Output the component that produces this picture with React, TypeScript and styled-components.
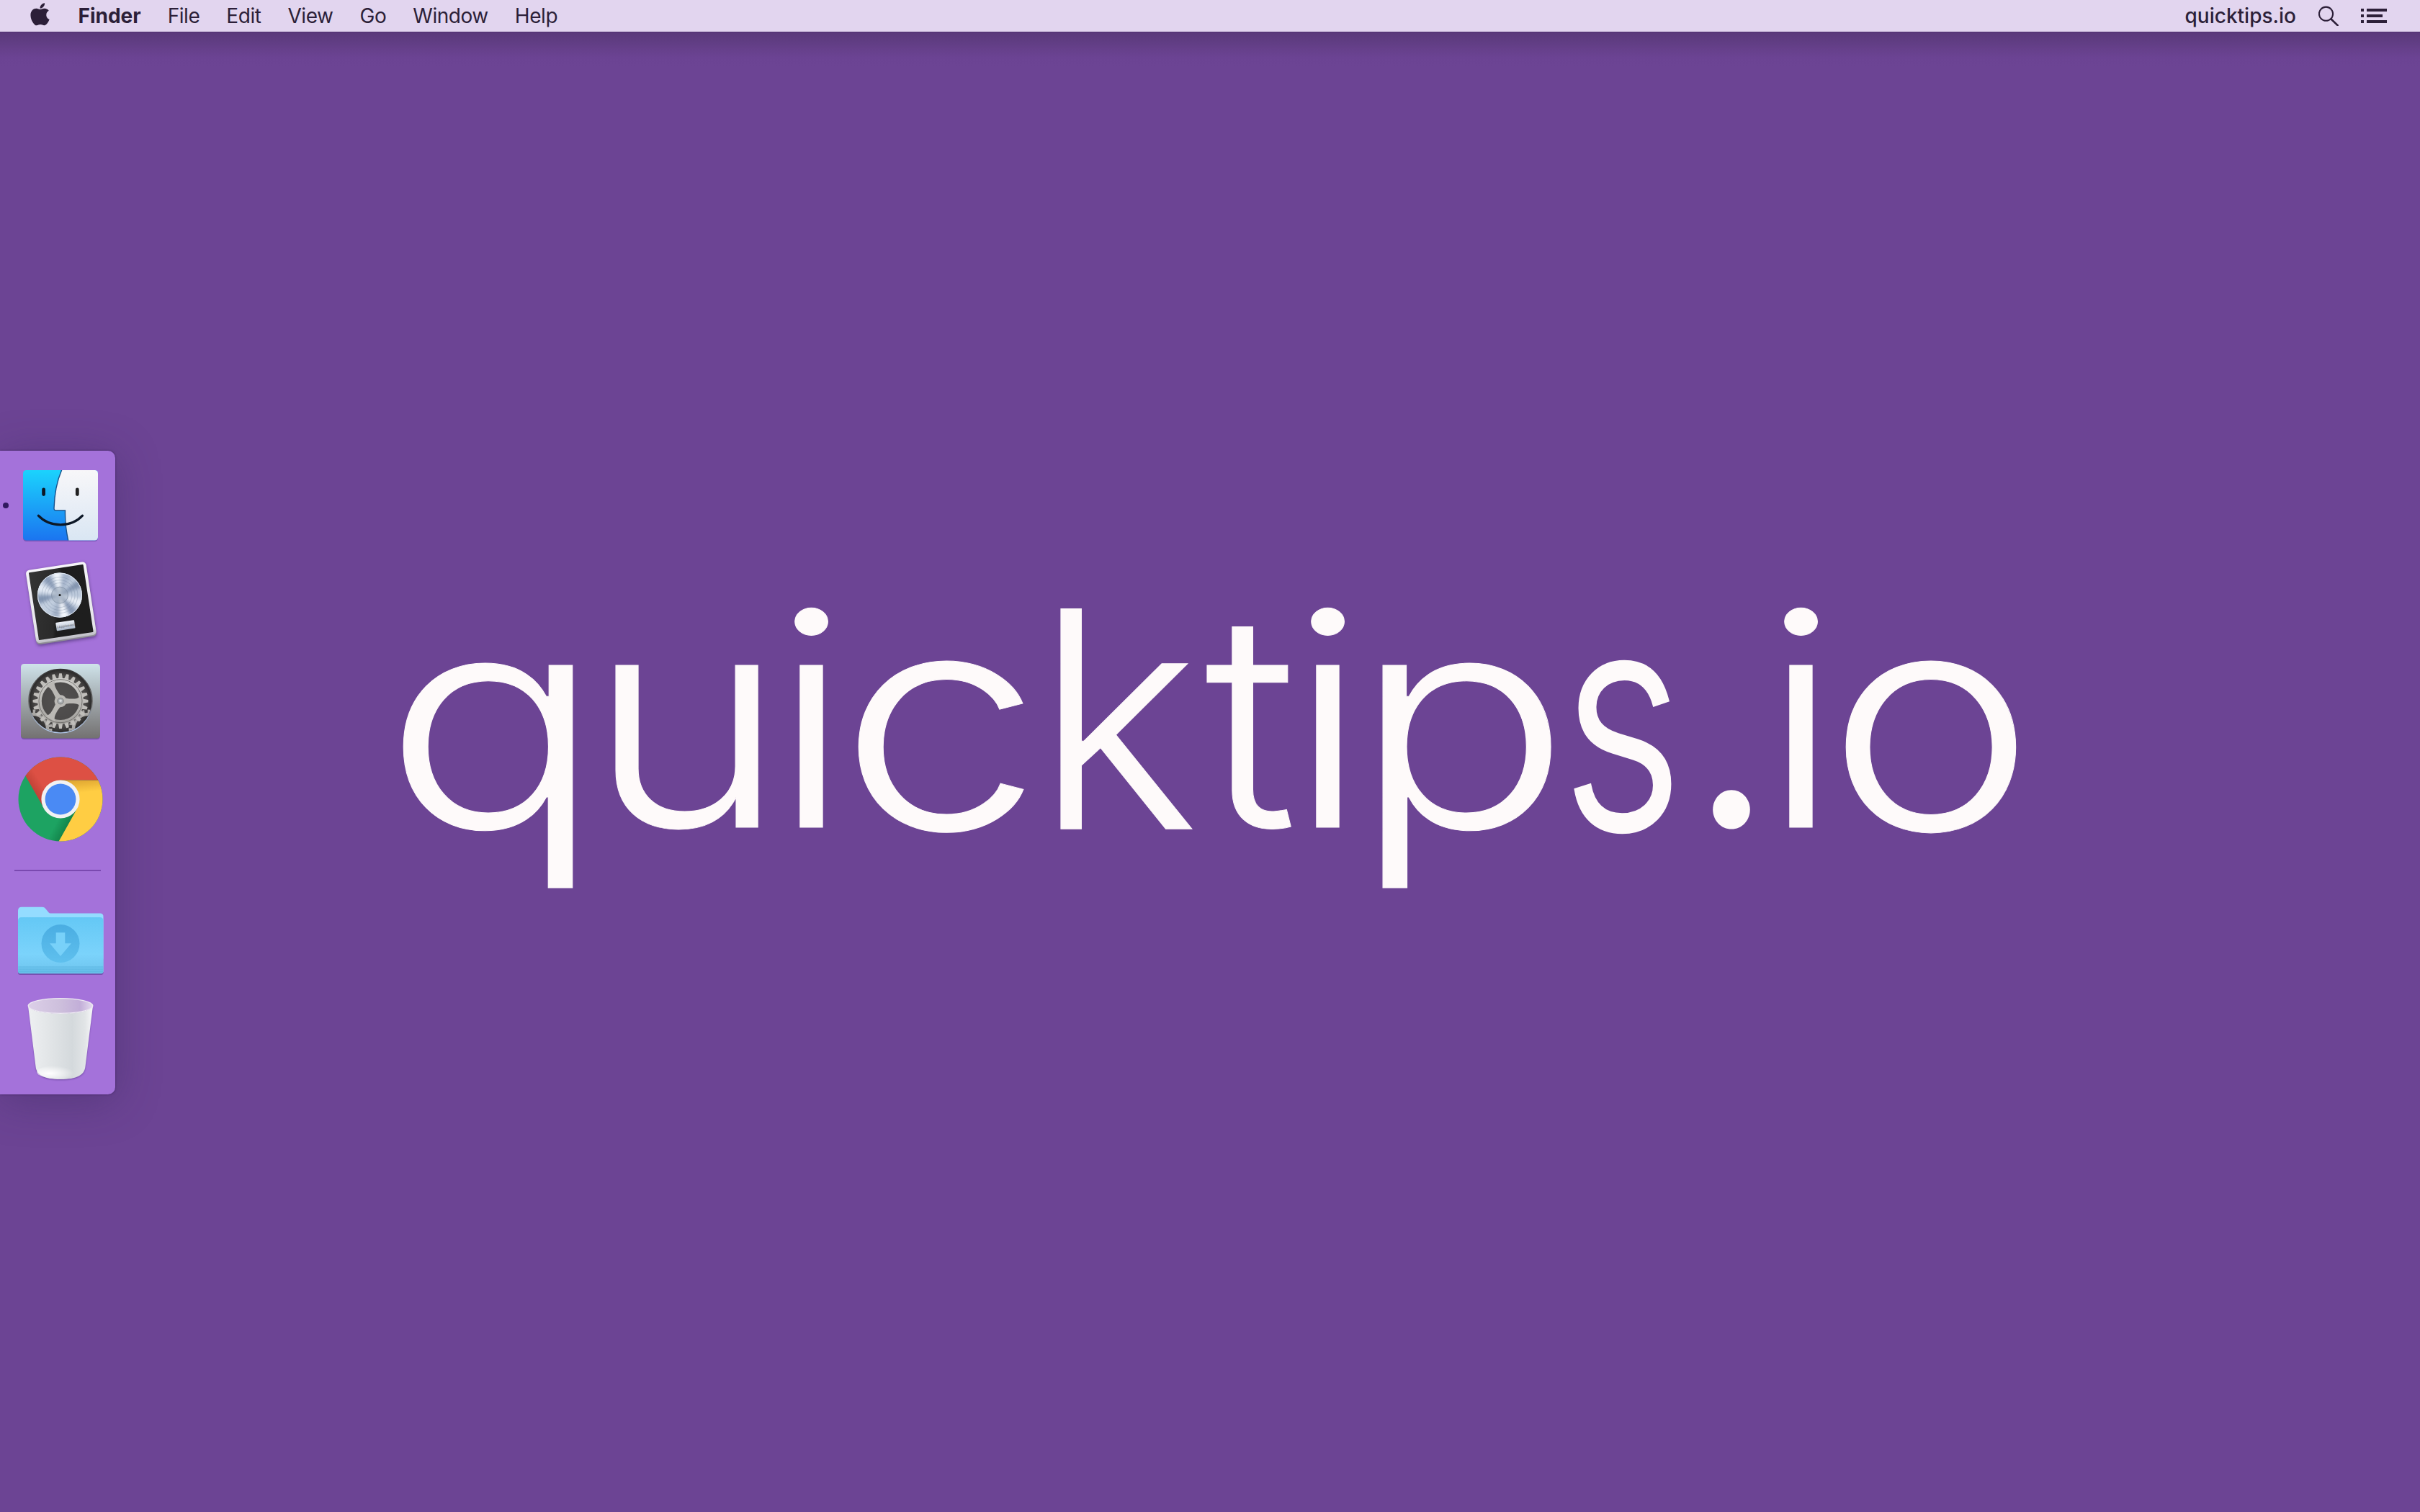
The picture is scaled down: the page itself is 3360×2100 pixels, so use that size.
import React from "react";
import styled, { createGlobalStyle } from "styled-components";
import { FaApple } from "react-icons/fa";

const GlobalStyle = createGlobalStyle`
  * { box-sizing: border-box; }
  html, body { margin: 0; padding: 0; }
  body { background: #6c4494; font-family: Inter, "Liberation Sans", sans-serif; }
`;

const Desktop = styled.div`
  width: 3360px;
  height: 2100px;
  display: grid;
  grid-template-rows: 44px 1fr;
  background: #6c4494;
  overflow: hidden;
`;

const MenuBar = styled.header`
  position: relative;
  z-index: 2;
  display: flex;
  align-items: center;
  justify-content: space-between;
  padding: 0 46px 0 42px;
  background: #e2d5ef;
  color: #2c1f38;
  box-shadow: 0 1px 0 #4f326f;
`;

const MenuGroup = styled.nav<{ $gap: number }>`
  display: flex;
  align-items: center;
  height: 44px;
  gap: ${(p) => p.$gap}px;
`;

const AppleMark = styled(FaApple)`
  width: 27px;
  height: 35.6px;
  margin-right: 2.5px;
  margin-bottom: 5px;
`;

const MenuItem = styled.span<{ $weight?: number; $tracking?: number }>`
  font-size: 28px;
  line-height: 44px;
  font-weight: ${(p) => p.$weight ?? 400};
  letter-spacing: ${(p) => p.$tracking ?? -0.45}px;
  white-space: nowrap;
`;

const StatusIcon = styled.svg`
  display: block;
`;

const Workspace = styled.main`
  display: grid;
  grid-template-columns: 560px 1fr;
  background: linear-gradient(#5a397a 0, #5e3c80 10px, #66408b 24px, #6b4393 36px, #6c4494 48px);
`;

const DockColumn = styled.aside`
  padding-top: 582px;
`;

const Dock = styled.div`
  width: 160px;
  height: 894px;
  padding-top: 7px;
  display: flex;
  flex-direction: column;
  border-radius: 0 10px 10px 0;
  background: #a472da;
  box-shadow: 0 0 3px rgba(40, 20, 70, 0.6), 0 8px 60px rgba(50, 40, 90, 0.38);
`;

const DockItem = styled.div`
  display: grid;
  grid-template-columns: 20px 128px;
  align-items: center;
  height: 136px;
`;

const RunningDot = styled.i<{ $on: boolean }>`
  width: 8px;
  height: 8px;
  margin-left: 4px;
  margin-top: 2px;
  border-radius: 50%;
  background: ${(p) => (p.$on ? "#30195f" : "transparent")};
`;

const Icon = styled.svg`
  display: block;
  width: 128px;
  height: 136px;
  overflow: visible;
`;

const DockDivider = styled.hr`
  width: 120px;
  height: 2px;
  flex: none;
  margin: 31px 0 28px 20px;
  border: 0;
  background: #7a49b0;
`;

const Wordmark = styled.h1`
  display: flex;
  margin: 749px 0 0;
  height: 412px;
  color: #fefafa;
  font-size: 412px;
  line-height: 412px;
  font-weight: 300;
`;

const Cell = styled.span<{ $pitch: number }>`
  flex: none;
  width: ${(p) => p.$pitch}px;
`;

type GlyphProps = {
  $width: number;
  $bearing: number;
  $stretch: number;
  $tall: number;
  $bold: number;
  $weight: number;
};

const Glyph = styled.span<GlyphProps>`
  display: block;
  width: ${(p) => p.$width}px;
  font-weight: ${(p) => p.$weight};
  text-indent: ${(p) => -p.$bearing}px;
  transform: scale(${(p) => p.$stretch}, ${(p) => p.$tall});
  transform-origin: 0 244px;
  -webkit-text-stroke: ${(p) => p.$bold}px #fefafa;
`;

type Letter = {
  char: string;
  pitch: number;
  bearing: number;
  stretch: number;
  tall?: number;
  bold?: number;
  weight?: number;
};

const letters: Letter[] = [
  { char: "q", pitch: 294.4, bearing: 22.5, stretch: 1.229 },
  { char: "u", pitch: 248.9, bearing: 33.5, stretch: 1.134 },
  { char: "i", pitch: 89.2, bearing: 27.5, stretch: 1.14 },
  { char: "c", pitch: 279.1, bearing: 22.5, stretch: 1.228, tall: 1.026 },
  { char: "k", pitch: 203.2, bearing: 33.5, stretch: 1.041, tall: 1.02 },
  { char: "t", pitch: 144.8, bearing: 2.5, stretch: 1.045 },
  { char: "i", pitch: 99.3, bearing: 27.5, stretch: 1.14 },
  { char: "p", pitch: 267.1, bearing: 33.5, stretch: 1.22 },
  { char: "s", pitch: 192.1, bearing: 22, stretch: 0.79, tall: 1.02, bold: 4 },
  { char: ".", pitch: 99, bearing: 32, stretch: 0.95, bold: 0, weight: 400 },
  { char: "i", pitch: 85.5, bearing: 27.5, stretch: 1.14 },
  { char: "o", pitch: 240, bearing: 22.5, stretch: 1.184, tall: 1.026 },
];

const FinderIcon = () => (
  <Icon viewBox="20 633 128 136">
    <defs>
      <linearGradient id="fBlue" x1="0" y1="0" x2="0" y2="1">
        <stop offset="0" stopColor="#1bd3fd" />
        <stop offset="1" stopColor="#1b74f0" />
      </linearGradient>
      <linearGradient id="fWhite" x1="0" y1="0" x2="0" y2="1">
        <stop offset="0" stopColor="#f8f7f9" />
        <stop offset="1" stopColor="#d9e6f3" />
      </linearGradient>
      <clipPath id="fClip"><rect x="32" y="653" width="104" height="97.5" rx="4.5" /></clipPath>
    </defs>
    <rect x="32" y="654.5" width="104" height="97.5" rx="4.5" fill="#5b3a94" opacity="0.55" />
    <g clipPath="url(#fClip)">
      <rect x="32" y="653" width="104" height="98" fill="url(#fBlue)" />
      <path d="M86 652C79 668 75.5 688 75 706Q74.8 709 78 709H90.5Q90 730 95 752H137V652Z" fill="url(#fWhite)" stroke="#17528c" strokeWidth="1.4" />
    </g>
    <g fill="none" stroke="#0d1826" strokeLinecap="round">
      <path d="M60.6 680v6.6" strokeWidth="4.8" />
      <path d="M107.3 680v6.6" strokeWidth="4.8" stroke="#212121" />
      <path d="M53.3 716.2C69 733 99 733 114.5 716.2" strokeWidth="3.2" />
    </g>
  </Icon>
);

const discRays: [number, string][] = [
  [20, "#e9eef6"], [52, "#8798b3"], [78, "#f3f6fb"], [100, "#a2b0c6"], [140, "#c3cfdf"],
  [168, "#8395b1"], [200, "#e3eaf4"], [232, "#8c9db8"], [262, "#f1f5fb"], [290, "#a5b4cb"], [330, "#8495b0"],
];

const LogicIcon = () => (
  <Icon viewBox="20 769 128 136">
    <defs>
      <linearGradient id="lFrame" x1="0" y1="0" x2="0" y2="1">
        <stop offset="0" stopColor="#f6f5f9" />
        <stop offset="0.9" stopColor="#e3e3e8" />
        <stop offset="1" stopColor="#bdbdc4" />
      </linearGradient>
      <linearGradient id="lBoard" x1="0" y1="0" x2="1" y2="0.3">
        <stop offset="0" stopColor="#343434" />
        <stop offset="0.5" stopColor="#2a2a2a" />
        <stop offset="0.56" stopColor="#1c1c1c" />
        <stop offset="1" stopColor="#1e1e1e" />
      </linearGradient>
      <linearGradient id="lPlate" x1="0" y1="0" x2="0" y2="1">
        <stop offset="0" stopColor="#eef2f8" />
        <stop offset="1" stopColor="#a9b6c8" />
      </linearGradient>
      <filter id="lSoft" x="-20%" y="-20%" width="140%" height="140%"><feGaussianBlur stdDeviation="2.2" /></filter>
      <clipPath id="lClip"><circle cx="83" cy="826.6" r="31" /></clipPath>
    </defs>
    <g transform="rotate(-8.6 85 836.5)">
      <rect x="43" y="787" width="84" height="105" rx="5" fill="#3b2560" opacity="0.6" filter="url(#lSoft)" />
      <rect x="42.5" y="787" width="84.5" height="103" rx="5" fill="#8d8c93" />
      <rect x="42.5" y="785.5" width="84.5" height="102.5" rx="5" fill="url(#lFrame)" />
      <rect x="46.5" y="789" width="76.5" height="95" rx="1" fill="url(#lBoard)" />
      <rect x="73" y="863.5" width="26" height="11.5" rx="1" fill="url(#lPlate)" />
      <text x="86" y="871.5" fontSize="4.6" fontFamily="Inter, sans-serif" textAnchor="middle" fill="#62666d">J.Appleseed</text>
    </g>
    <circle cx="83" cy="826.6" r="31" fill="#bcc9db" />
    <g clipPath="url(#lClip)"><g filter="url(#lSoft)">
      {discRays.map(([angle, color]) => (
        <path key={angle} d="M83 826.6L121 819.5V833.7Z" fill={color} transform={`rotate(${angle} 83 826.6)`} />
      ))}
    </g></g>
    <circle cx="83" cy="826.6" r="30.5" fill="none" stroke="#dfe7f1" strokeWidth="1" />
    <g fill="none" stroke="#75869f" strokeWidth="0.5" opacity="0.65">
      <circle cx="83" cy="826.6" r="25" /><circle cx="83" cy="826.6" r="21" /><circle cx="83" cy="826.6" r="17" />
    </g>
    <circle cx="83" cy="826.6" r="11.5" fill="#8d9aab" fillOpacity="0.35" stroke="#7e8ca1" strokeWidth="0.7" />
    <circle cx="83" cy="826.6" r="1.5" fill="#111" />
  </Icon>
);

const teeth = Array.from({ length: 24 }, (_, i) => i * 15);

const SettingsIcon = () => (
  <Icon viewBox="20 905 128 136">
    <defs>
      <linearGradient id="sPlate" x1="0" y1="0" x2="0" y2="1">
        <stop offset="0" stopColor="#cfe3ea" />
        <stop offset="0.5" stopColor="#a0a7ab" />
        <stop offset="1" stopColor="#737171" />
      </linearGradient>
      <linearGradient id="sGear" x1="0" y1="0" x2="0" y2="1">
        <stop offset="0" stopColor="#d0cfcc" />
        <stop offset="1" stopColor="#a3a19d" />
      </linearGradient>
      <linearGradient id="sRim" x1="0" y1="0" x2="0" y2="1">
        <stop offset="0" stopColor="#333" />
        <stop offset="0.55" stopColor="#777" />
        <stop offset="1" stopColor="#b4cbed" />
      </linearGradient>
      <radialGradient id="sWell">
        <stop offset="0" stopColor="#5b5958" />
        <stop offset="0.8" stopColor="#4b4948" />
        <stop offset="1" stopColor="#282727" />
      </radialGradient>
      <clipPath id="sClip"><circle cx="84" cy="973.7" r="43.5" /></clipPath>
    </defs>
    <rect x="29" y="923.5" width="110" height="103.5" rx="4.5" fill="#5b3a94" opacity="0.6" />
    <rect x="29" y="922" width="110" height="103.5" rx="4.5" fill="url(#sPlate)" />
    <circle cx="84" cy="973.7" r="44.2" fill="url(#sWell)" stroke="url(#sRim)" strokeWidth="1.4" />
    <g clipPath="url(#sClip)" fill="none" stroke="#aaa8a5" strokeWidth="4.5">
      <circle cx="46" cy="1012" r="20" />
      <circle cx="122" cy="1012" r="20" />
      <g strokeWidth="5" strokeDasharray="3.6 4.4">
        <circle cx="46" cy="1012" r="24" />
        <circle cx="122" cy="1012" r="24" />
      </g>
    </g>
    <circle cx="84" cy="973.7" r="34" fill="#4a4847" opacity="0.5" />
    {teeth.map((a) => (
      <path key={a} d="M80.8 943.4L82.2 935.3H85.8L87.2 943.4Z" transform={`rotate(${a} 84 973.7)`} fill="#c0beba" />
    ))}
    <path fill="url(#sGear)" fillRule="evenodd" d="M84 941.7a32 32 0 1 0 0 64a32 32 0 1 0 0-64ZM84 947.5a26.2 26.2 0 1 1 0 52.4a26.2 26.2 0 1 1 0-52.4Z" />
    <circle cx="84" cy="973.7" r="30" fill="none" stroke="#6e6c69" strokeWidth="0.9" />
    {[0, 120, 240].map((a) => (
      <path key={a} d="M84 968.5C93 970.6 98 970.8 104 970.4Q110 970 112.5 965V982.4Q110 977.6 104 977.2C98 976.8 93 977 84 979Z" transform={`rotate(${a} 84 973.7)`} fill="#bab8b4" />
    ))}
    <circle cx="84" cy="973.7" r="8.5" fill="#bab8b4" />
    <circle cx="84" cy="973.7" r="4.2" fill="#a9adaf" stroke="#777" strokeWidth="0.9" />
    <circle cx="84" cy="973.2" r="1.8" fill="#d9dcdd" />
  </Icon>
);

const ChromeIcon = () => (
  <Icon viewBox="20 1041 128 136">
    <defs>
      <clipPath id="cClip"><circle cx="84" cy="1110" r="58.5" /></clipPath>
      <linearGradient id="cRed" gradientUnits="userSpaceOnUse" x1="44" y1="1106" x2="62" y2="1094">
        <stop offset="0" stopColor="#b43c31" />
        <stop offset="1" stopColor="#dd5044" />
      </linearGradient>
      <linearGradient id="cYellow" gradientUnits="userSpaceOnUse" x1="110" y1="1083" x2="112" y2="1101">
        <stop offset="0" stopColor="#dfa632" />
        <stop offset="1" stopColor="#ffcd43" />
      </linearGradient>
      <linearGradient id="cGreen" gradientUnits="userSpaceOnUse" x1="95" y1="1147" x2="80" y2="1139">
        <stop offset="0" stopColor="#12834a" />
        <stop offset="1" stopColor="#1da362" />
      </linearGradient>
    </defs>
    <g clipPath="url(#cClip)">
      <rect x="25" y="1050" width="118" height="120" fill="url(#cGreen)" />
      <path d="M84 1083.5H150V1175H78L106.8 1123.5Z" fill="url(#cYellow)" />
      <path d="M35 1077L60.8 1122L84 1110V1083.5H150V1045H30Z" fill="url(#cRed)" />
    </g>
    <circle cx="84" cy="1110" r="26.6" fill="#f2f2f2" />
    <circle cx="84" cy="1110" r="21.4" fill="#4a8af4" />
  </Icon>
);

const DownloadsIcon = () => (
  <Icon viewBox="20 1238 128 136">
    <defs>
      <linearGradient id="dFront" x1="0" y1="0" x2="0" y2="1">
        <stop offset="0" stopColor="#64c8f5" />
        <stop offset="0.65" stopColor="#7bd3fb" />
        <stop offset="0.85" stopColor="#73caf3" />
        <stop offset="1" stopColor="#64bce6" />
      </linearGradient>
      <linearGradient id="dBadge" x1="0" y1="0" x2="0" y2="1">
        <stop offset="0" stopColor="#4aade2" />
        <stop offset="1" stopColor="#5fc0ee" />
      </linearGradient>
    </defs>
    <rect x="25" y="1330" width="118.5" height="24" rx="3" fill="#5b3a94" opacity="0.6" />
    <path d="M25 1350V1265Q25 1259.7 30 1259.7H59Q61.5 1259.7 63 1261.7L67.5 1267.3Q68.5 1268.5 70 1268.5H139Q143.5 1268.5 143.5 1273V1350Z" fill="#94dcff" />
    <path d="M25 1279Q25 1274 30 1274H138.5Q143.5 1274 143.5 1279V1349Q143.5 1352.3 140.5 1352.3H28Q25 1352.3 25 1349Z" fill="url(#dFront)" />
    <path d="M25.5 1343H143M25.5 1346H143M25.5 1349H143" stroke="#56b0dc" strokeWidth="0.9" opacity="0.8" />
    <circle cx="84" cy="1310.5" r="26.5" fill="url(#dBadge)" />
    <path d="M77.7 1295.3H90.3V1310.2H99L84 1328L69 1310.2H77.7Z" fill="#78d1f9" />
  </Icon>
);

const TrashIcon = () => (
  <Icon viewBox="20 1374 128 136">
    <defs>
      <linearGradient id="tBody" x1="0" y1="0" x2="1" y2="0">
        <stop offset="0" stopColor="#eef0f2" />
        <stop offset="0.3" stopColor="#e3e6e8" />
        <stop offset="0.68" stopColor="#d4d9dc" />
        <stop offset="0.88" stopColor="#e2e5e7" />
        <stop offset="1" stopColor="#f7f8f9" />
      </linearGradient>
      <linearGradient id="tInner" x1="0" y1="0" x2="1" y2="0">
        <stop offset="0" stopColor="#dccfe8" />
        <stop offset="0.5" stopColor="#cdbfdc" />
        <stop offset="0.8" stopColor="#c2aed8" />
        <stop offset="1" stopColor="#e5dcef" />
      </linearGradient>
      <radialGradient id="tGlow" cx="0.3" cy="0.6" r="0.6">
        <stop offset="0" stopColor="#fff" />
        <stop offset="1" stopColor="#fff" stopOpacity="0" />
      </radialGradient>
      <filter id="tSoft"><feGaussianBlur stdDeviation="1.2" /></filter>
    </defs>
    <path d="M40 1400L50 1485Q53 1500 84 1500T118 1485L128.5 1400Z" fill="#4c2f7d" opacity="0.6" filter="url(#tSoft)" />
    <path d="M39 1397L49.5 1481C50.5 1493 61 1499 84 1499S117.500 1493 118.500 1481L129 1397C126 1411 42 1411 39 1397Z" fill="url(#tBody)" />
    <ellipse cx="80" cy="1489" rx="29" ry="9" fill="url(#tGlow)" />
    <ellipse cx="84" cy="1397" rx="44.8" ry="10.4" fill="url(#tInner)" stroke="#eeeaf3" strokeWidth="1.3" />
  </Icon>
);

const menus = ["File", "Edit", "View", "Go", "Window", "Help"];

export default function App() {
  return (
    <Desktop>
      <GlobalStyle />
      <MenuBar>
        <MenuGroup $gap={37}>
          <AppleMark />
          <MenuItem $weight={700} $tracking={0}>Finder</MenuItem>
          {menus.map((m) => <MenuItem key={m}>{m}</MenuItem>)}
        </MenuGroup>
        <MenuGroup $gap={31}>
          <MenuItem $weight={500} $tracking={0}>quicktips.io</MenuItem>
          <StatusIcon width="28" height="28" viewBox="0 0 28 28" fill="none" stroke="#2c1f38" strokeWidth="2.1">
            <circle cx="10.5" cy="11.2" r="9.6" />
            <path d="M17.3 18.2L27.500 28" strokeWidth="2.6" />
          </StatusIcon>
          <StatusIcon width="36" height="20" viewBox="0 0 36 20" fill="#2c1f38">
            <path d="M0 0h4v4H0zM8 0h28v4H8zM0 8h4v4H0zM8 8h22v4H8zM0 16h4v4H0zM8 16h28v4H8z" />
          </StatusIcon>
        </MenuGroup>
      </MenuBar>
      <Workspace>
        <DockColumn>
          <Dock>
            <DockItem><RunningDot $on /><FinderIcon /></DockItem>
            <DockItem><RunningDot $on={false} /><LogicIcon /></DockItem>
            <DockItem><RunningDot $on={false} /><SettingsIcon /></DockItem>
            <DockItem><RunningDot $on={false} /><ChromeIcon /></DockItem>
            <DockDivider />
            <DockItem><RunningDot $on={false} /><DownloadsIcon /></DockItem>
            <DockItem><RunningDot $on={false} /><TrashIcon /></DockItem>
          </Dock>
        </DockColumn>
        <Wordmark>
          {letters.map((l, i) => (
            <Cell key={i} $pitch={l.pitch}>
              <Glyph
                $width={l.pitch / l.stretch}
                $bearing={l.bearing}
                $stretch={l.stretch}
                $tall={l.tall ?? 1}
                $bold={l.bold ?? 1}
                $weight={l.weight ?? 300}
              >
                {l.char}
              </Glyph>
            </Cell>
          ))}
        </Wordmark>
      </Workspace>
    </Desktop>
  );
}
